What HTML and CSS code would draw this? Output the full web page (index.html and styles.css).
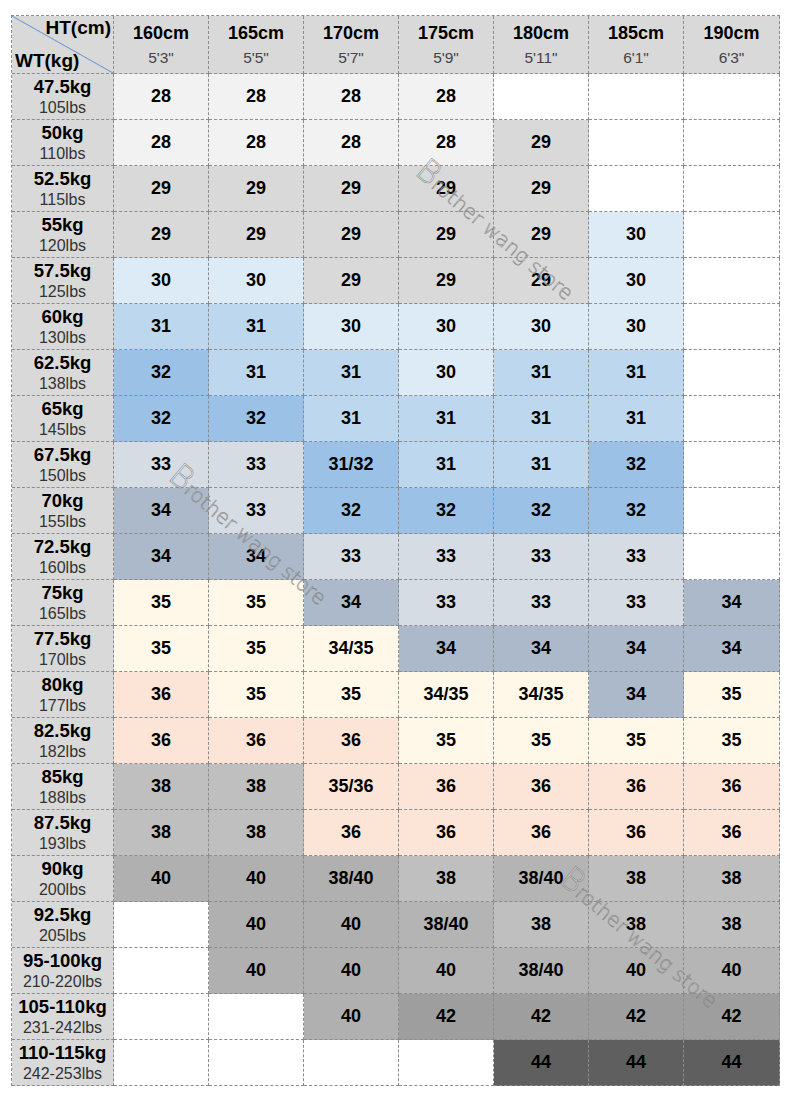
FILE: index.html
```html
<!DOCTYPE html>
<html lang="en">
<head>
<meta charset="utf-8">
<title>Size chart</title>
<link rel="stylesheet" href="styles.css">
</head>
<body>
<div class="page">
  <div class="chart">
    <div class="corner"><span class="ht">HT(cm)</span><span class="wt">WT(kg)</span></div>
    <div class="hd"><b>160cm</b><span>5'3"</span></div>
    <div class="hd"><b>165cm</b><span>5'5"</span></div>
    <div class="hd"><b>170cm</b><span>5'7"</span></div>
    <div class="hd"><b>175cm</b><span>5'9"</span></div>
    <div class="hd"><b>180cm</b><span>5'11"</span></div>
    <div class="hd"><b>185cm</b><span>6'1"</span></div>
    <div class="hd"><b>190cm</b><span>6'3"</span></div>

    <div class="wt-cell"><b>47.5kg</b><span>105lbs</span></div>
    <div class="c c28">28</div><div class="c c28">28</div><div class="c c28">28</div><div class="c c28">28</div><div class="c"></div><div class="c"></div><div class="c"></div>

    <div class="wt-cell"><b>50kg</b><span>110lbs</span></div>
    <div class="c c28">28</div><div class="c c28">28</div><div class="c c28">28</div><div class="c c28">28</div><div class="c c29">29</div><div class="c"></div><div class="c"></div>

    <div class="wt-cell"><b>52.5kg</b><span>115lbs</span></div>
    <div class="c c29">29</div><div class="c c29">29</div><div class="c c29">29</div><div class="c c29">29</div><div class="c c29">29</div><div class="c"></div><div class="c"></div>

    <div class="wt-cell"><b>55kg</b><span>120lbs</span></div>
    <div class="c c29">29</div><div class="c c29">29</div><div class="c c29">29</div><div class="c c29">29</div><div class="c c29">29</div><div class="c c30">30</div><div class="c"></div>

    <div class="wt-cell"><b>57.5kg</b><span>125lbs</span></div>
    <div class="c c30">30</div><div class="c c30">30</div><div class="c c29">29</div><div class="c c29">29</div><div class="c c29">29</div><div class="c c30">30</div><div class="c"></div>

    <div class="wt-cell"><b>60kg</b><span>130lbs</span></div>
    <div class="c c31">31</div><div class="c c31">31</div><div class="c c30">30</div><div class="c c30">30</div><div class="c c30">30</div><div class="c c30">30</div><div class="c"></div>

    <div class="wt-cell"><b>62.5kg</b><span>138lbs</span></div>
    <div class="c c32">32</div><div class="c c31">31</div><div class="c c31">31</div><div class="c c30">30</div><div class="c c31">31</div><div class="c c31">31</div><div class="c"></div>

    <div class="wt-cell"><b>65kg</b><span>145lbs</span></div>
    <div class="c c32">32</div><div class="c c32">32</div><div class="c c31">31</div><div class="c c31">31</div><div class="c c31">31</div><div class="c c31">31</div><div class="c"></div>

    <div class="wt-cell"><b>67.5kg</b><span>150lbs</span></div>
    <div class="c c33">33</div><div class="c c33">33</div><div class="c c32">31/32</div><div class="c c31">31</div><div class="c c31">31</div><div class="c c32">32</div><div class="c"></div>

    <div class="wt-cell"><b>70kg</b><span>155lbs</span></div>
    <div class="c c34">34</div><div class="c c33">33</div><div class="c c32">32</div><div class="c c32">32</div><div class="c c32">32</div><div class="c c32">32</div><div class="c"></div>

    <div class="wt-cell"><b>72.5kg</b><span>160lbs</span></div>
    <div class="c c34">34</div><div class="c c34">34</div><div class="c c33">33</div><div class="c c33">33</div><div class="c c33">33</div><div class="c c33">33</div><div class="c"></div>

    <div class="wt-cell"><b>75kg</b><span>165lbs</span></div>
    <div class="c c35">35</div><div class="c c35">35</div><div class="c c34">34</div><div class="c c33">33</div><div class="c c33">33</div><div class="c c33">33</div><div class="c c34">34</div>

    <div class="wt-cell"><b>77.5kg</b><span>170lbs</span></div>
    <div class="c c35">35</div><div class="c c35">35</div><div class="c c35">34/35</div><div class="c c34">34</div><div class="c c34">34</div><div class="c c34">34</div><div class="c c34">34</div>

    <div class="wt-cell"><b>80kg</b><span>177lbs</span></div>
    <div class="c c36">36</div><div class="c c35">35</div><div class="c c35">35</div><div class="c c35">34/35</div><div class="c c35">34/35</div><div class="c c34">34</div><div class="c c35">35</div>

    <div class="wt-cell"><b>82.5kg</b><span>182lbs</span></div>
    <div class="c c36">36</div><div class="c c36">36</div><div class="c c36">36</div><div class="c c35">35</div><div class="c c35">35</div><div class="c c35">35</div><div class="c c35">35</div>

    <div class="wt-cell"><b>85kg</b><span>188lbs</span></div>
    <div class="c c38">38</div><div class="c c38">38</div><div class="c c36">35/36</div><div class="c c36">36</div><div class="c c36">36</div><div class="c c36">36</div><div class="c c36">36</div>

    <div class="wt-cell"><b>87.5kg</b><span>193lbs</span></div>
    <div class="c c38">38</div><div class="c c38">38</div><div class="c c36">36</div><div class="c c36">36</div><div class="c c36">36</div><div class="c c36">36</div><div class="c c36">36</div>

    <div class="wt-cell"><b>90kg</b><span>200lbs</span></div>
    <div class="c c40">40</div><div class="c c40">40</div><div class="c c40">38/40</div><div class="c c38">38</div><div class="c c3840">38/40</div><div class="c c38">38</div><div class="c c38">38</div>

    <div class="wt-cell"><b>92.5kg</b><span>205lbs</span></div>
    <div class="c"></div><div class="c c40">40</div><div class="c c40">40</div><div class="c c3840">38/40</div><div class="c c38">38</div><div class="c c38">38</div><div class="c c38">38</div>

    <div class="wt-cell"><b>95-100kg</b><span>210-220lbs</span></div>
    <div class="c"></div><div class="c c40">40</div><div class="c c40">40</div><div class="c c40b">40</div><div class="c c3840">38/40</div><div class="c c40b">40</div><div class="c c40b">40</div>

    <div class="wt-cell"><b>105-110kg</b><span>231-242lbs</span></div>
    <div class="c"></div><div class="c"></div><div class="c c40">40</div><div class="c c42">42</div><div class="c c42">42</div><div class="c c42">42</div><div class="c c42">42</div>

    <div class="wt-cell"><b>110-115kg</b><span>242-253lbs</span></div>
    <div class="c"></div><div class="c"></div><div class="c"></div><div class="c"></div><div class="c c44">44</div><div class="c c44">44</div><div class="c c44">44</div>
  </div>

  <span class="mark mark-1"><span class="cap">B</span>rother wang store</span>
  <span class="mark mark-2"><span class="cap">B</span>rother wang store</span>
  <span class="mark mark-3"><span class="cap">B</span>rother wang store</span>
</div>
</body>
</html>
```

FILE: styles.css
```css
html, body {
  margin: 0;
  padding: 0;
  background: #ffffff;
}

body {
  font-family: "Liberation Sans", Arial, Helvetica, sans-serif;
  color: #000;
}

.page {
  position: relative;
  padding: 15px 11px 16px 11px;
  width: max-content;
}

.chart {
  display: grid;
  grid-template-columns: 102px repeat(6, 95px) 96px;
  grid-template-rows: 58px repeat(22, 46px);
  border-left: 1px dashed #8c8c8c;
  border-top: 1px dashed #8c8c8c;
}

.chart > div {
  box-sizing: border-box;
  border-right: 1px dashed #8c8c8c;
  border-bottom: 1px dashed #8c8c8c;
  background: #ffffff;
}

/* header corner with diagonal */
.chart > .corner {
  background: linear-gradient(to top right,
      #d9d9d9 calc(50% - 1px),
      #6d9bd0 50%,
      #d9d9d9 calc(50% + 1px));
  font-weight: bold;
  font-size: 19px;
  display: flex;
  flex-direction: column;
  justify-content: space-between;
  padding: 0 2px 0 3px;
}

.corner .ht {
  align-self: flex-end;
  line-height: 24px;
}

.corner .wt {
  align-self: flex-start;
  line-height: 24px;
}

.chart > .hd {
  background: #d9d9d9;
  display: flex;
  flex-direction: column;
  align-items: center;
  justify-content: center;
  gap: 6px;
}

.hd b {
  font-size: 18px;
  line-height: 20px;
}

.hd span {
  font-size: 15.5px;
  line-height: 17px;
  color: #444;
}

.chart > .wt-cell {
  background: #d9d9d9;
  display: flex;
  flex-direction: column;
  align-items: center;
  justify-content: center;
  gap: 2px;
}

.wt-cell b {
  font-size: 18.5px;
  line-height: 20px;
}

.wt-cell span {
  font-size: 16px;
  line-height: 18px;
  color: #333;
}

.chart > .c {
  display: flex;
  align-items: center;
  justify-content: center;
  font-weight: bold;
  font-size: 18px;
}

.chart > .c28 { background: #f2f2f2; }
.chart > .c29 { background: #d9d9d9; }
.chart > .c30 { background: #ddebf7; }
.chart > .c31 { background: #bdd7ee; }
.chart > .c32 { background: #9bc2e6; }
.chart > .c33 { background: #d6dce4; }
.chart > .c34 { background: #acb9ca; }
.chart > .c35 { background: #fff8e8; }
.chart > .c36 { background: #fce4d6; }
.chart > .c38 { background: #bfbfbf; }
.chart > .c40 { background: #b0b0b0; }
.chart > .c40b { background: #b5b5b5; }
.chart > .c3840 { background: #b4b4b4; }
.chart > .c42 { background: #9e9e9e; }
.chart > .c44 { background: #5f5f5f; }

/* watermark overlay */
.mark {
  position: absolute;
  transform: translate(-50%, -50%) rotate(40deg);
  font-family: "DejaVu Sans", sans-serif;
  font-weight: 200;
  font-size: 20px;
  white-space: nowrap;
  color: rgba(255, 255, 255, 0.35);
  -webkit-text-stroke: 0.6px rgba(120, 120, 120, 0.8);
  pointer-events: none;
}

.mark .cap {
  font-size: 32px;
}

.mark-1 { left: 497px; top: 229px; }
.mark-2 { left: 250px; top: 534px; }
.mark-3 { left: 641px; top: 937px; }
```
